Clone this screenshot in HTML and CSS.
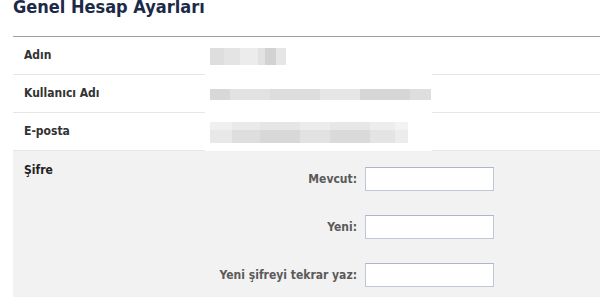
FILE: index.html
```html
<!DOCTYPE html>
<html lang="tr">
<head>
<meta charset="utf-8">
<title>Genel Hesap Ayarları</title>
<link rel="stylesheet" href="styles.css">
</head>
<body>
<div class="page">
  <h1 class="title">Genel Hesap Ayarları</h1>
  <div class="list">
    <div class="row">
      <div class="label-cell">Adın</div>
      <div class="value-cell"><span class="blur blur-name"></span></div>
      <div class="rest-cell"></div>
    </div>
    <div class="row">
      <div class="label-cell">Kullanıcı Adı</div>
      <div class="value-cell"><span class="blur blur-user"></span></div>
      <div class="rest-cell"></div>
    </div>
    <div class="row">
      <div class="label-cell">E-posta</div>
      <div class="value-cell"><span class="blur blur-mail"></span></div>
      <div class="rest-cell"></div>
    </div>
    <div class="edit">
      <div class="edit-label">Şifre</div>
      <div class="form">
        <label class="field-label" for="cur">Mevcut:</label>
        <input class="field" id="cur" type="password">
        <label class="field-label" for="new">Yeni:</label>
        <input class="field" id="new" type="password">
        <label class="field-label" for="rep">Yeni şifreyi tekrar yaz:</label>
        <input class="field" id="rep" type="password">
      </div>
    </div>
  </div>
</div>
</body>
</html>
```
FILE: styles.css
```css
html, body {
  margin: 0;
  padding: 0;
  background: #ffffff;
  overflow: hidden;
}
body {
  font-family: "DejaVu Sans Condensed", "DejaVu Sans", Verdana, sans-serif;
  font-stretch: condensed;
  color: #333333;
}
.page {
  padding-left: 13px;
}
.title {
  margin: -4px 0 0 0;
  font-size: 18px;
  line-height: 22px;
  font-weight: bold;
  color: #1c2a47;
  height: 41px;
  box-sizing: border-box;
  border-bottom: 1px solid #a0a0a0;
}
.list {
  display: flex;
  flex-direction: column;
}
.row {
  display: grid;
  grid-template-columns: 192px 227px 1fr;
  height: 38px;
}
.label-cell {
  padding-left: 11px;
  font-size: 12px;
  font-weight: bold;
  line-height: 37px;
  border-bottom: 1px solid #e6e6e6;
}
.rest-cell {
  border-bottom: 1px solid #e6e6e6;
}
.value-cell {
  display: flex;
  align-items: center;
  padding-left: 5px;
}
.blur {
  display: block;
}
.blur-name {
  width: 76px;
  height: 17px;
  background: linear-gradient(90deg, #dedede 0 14px, #e4e4e4 14px 30px, #ececec 30px 48px, #e2e2e2 48px 55px, #d2d2d2 55px 66px, #e6e6e6 66px 76px);
}
.blur-user {
  width: 221px;
  height: 11px;
  background: linear-gradient(90deg, #d8d8d8 0 20px, #e2e2e2 20px 60px, #dddddd 60px 110px, #e6e6e6 110px 150px, #d6d6d6 150px 200px, #dedede 200px 221px);
}
.blur-mail {
  width: 198px;
  height: 21px;
  background:
    linear-gradient(180deg, rgba(255,255,255,0.35) 0 8px, transparent 8px),
    linear-gradient(90deg, #e8e8e8 0 22px, #dedede 22px 50px, #d8d8d8 50px 90px, #e2e2e2 90px 120px, #dadada 120px 160px, #e4e4e4 160px 185px, #ececec 185px 198px);
}
.edit {
  display: grid;
  grid-template-columns: 192px 1fr;
  background: #f2f2f2;
  padding: 16px 0 10px 0;
}
.edit-label {
  margin-top: -4px;
  padding-left: 11px;
  font-size: 12px;
  font-weight: bold;
  line-height: 14px;
  color: #222222;
}
.form {
  display: grid;
  grid-template-columns: 152px 129px;
  column-gap: 8px;
  row-gap: 24px;
  align-items: center;
}
.field-label {
  justify-self: end;
  font-size: 12px;
  font-weight: bold;
  color: #5a5a5a;
}
.field {
  box-sizing: border-box;
  width: 129px;
  height: 24px;
  margin: 0;
  padding: 3px;
  background: #ffffff;
  border: 1px solid #bdc7d8;
  border-top-color: #aeb6c6;
  font-family: inherit;
  font-size: 11px;
}
```
